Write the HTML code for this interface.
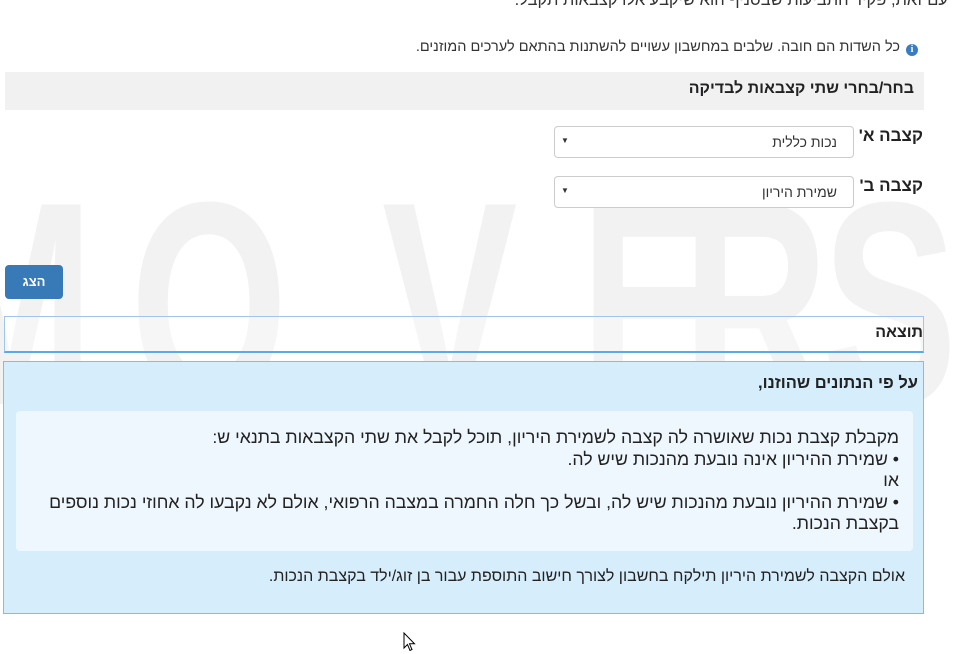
<!DOCTYPE html>
<html dir="rtl"><head><meta charset="utf-8"><style>
html,body{margin:0;width:954px;height:654px;overflow:hidden}
body{background:#fff;font-family:"Liberation Sans","DejaVu Sans Condensed",sans-serif;color:#333;position:relative}
.a{position:absolute}
.wmw{position:absolute;left:0;top:0;width:954px;height:654px;overflow:hidden}
.wm{position:absolute;top:159px;font-family:"Liberation Sans",sans-serif;font-weight:bold;font-size:290px;line-height:1;color:#f2f2f2;transform:scaleX(.7);transform-origin:left top;direction:ltr}
.sel{position:absolute;left:554px;width:298px;height:30px;border:1px solid #ccc;border-radius:4px;background:#fff;font-size:14px}
.sel span{position:absolute;right:16px;top:7px}
.sel i{position:absolute;left:6px;top:9px;font-style:normal;font-size:8px;color:#333}
.lbl{position:absolute;right:31px;font-size:17px;font-weight:bold;color:#222}
</style></head><body>
<div class="wmw">
<div class="wm" style="left:-75px">M</div>
<div class="wm" style="left:130px">O</div>
<div class="wm" style="left:382px">V</div>
<div class="wm" style="left:580px">E</div>
<div class="wm" style="left:682px">R</div>
<div class="wm" style="left:822px">S</div>
</div>
<div class="a" style="right:6px;top:-9px;font-size:16.5px;white-space:nowrap">עם זאת, פקיד התביעות שבסניף הוא שיקבע אלו קצבאות תקבל.</div>
<div class="a" style="right:36px;top:39px;font-size:14.5px;white-space:nowrap;color:#333"><span style="display:inline-block;width:12px;height:12px;border-radius:50%;background:#3a7cc4;color:#fff;font-size:10px;text-align:center;line-height:12px;font-weight:bold;margin-left:6px;vertical-align:-1px;font-family:serif">i</span>כל השדות הם חובה. שלבים במחשבון עשויים להשתנות בהתאם לערכים המוזנים.</div>
<div class="a" style="left:5px;top:72px;width:919px;height:38px;background:#f1f1f2"></div>
<div class="a" style="right:40px;top:80px;font-size:16px;font-weight:bold;color:#222">בחר/בחרי שתי קצבאות לבדיקה</div>
<div class="lbl" style="top:126px">קצבה א'</div>
<div class="sel" style="top:126px"><span>נכות כללית</span><i>▼</i></div>
<div class="lbl" style="top:176px">קצבה ב'</div>
<div class="sel" style="top:176px"><span>שמירת היריון</span><i>▼</i></div>
<div class="a" style="left:5px;top:265px;width:58px;height:34px;background:#3879b8;border-radius:4px;color:#fff;font-weight:bold;font-size:13px;text-align:center;line-height:34px">הצג</div>
<div class="a" style="left:4px;top:316px;width:918px;height:34px;border:1px solid #9fc4ee;border-bottom:2px solid #5aa9e8;background:rgba(255,255,255,.3)"></div>
<div class="a" style="right:31px;top:324px;font-size:16px;font-weight:bold;color:#222">תוצאה</div>
<div class="a" style="left:3px;top:361px;width:919px;height:251px;background:#d6eefc;border:1px solid #7cc0e8"></div>
<div class="a" style="right:36px;top:374px;font-size:16.5px;font-weight:bold;color:#222">על פי הנתונים שהוזנו,</div>
<div class="a" style="left:16px;top:411px;width:897px;height:140px;background:#eef7fe;border-radius:4px"></div>
<div class="a" style="right:55px;top:427px;width:885px;font-size:17.7px;line-height:21.5px;color:#222">מקבלת קצבת נכות שאושרה לה קצבה לשמירת היריון, תוכל לקבל את שתי הקצבאות בתנאי ש:<br>• שמירת ההיריון אינה נובעת מהנכות שיש לה.<br>או<br>• שמירת ההיריון נובעת מהנכות שיש לה, ובשל כך חלה החמרה במצבה הרפואי, אולם לא נקבעו לה אחוזי נכות נוספים בקצבת הנכות.</div>
<div class="a" style="right:49px;top:568px;font-size:16px;white-space:nowrap;color:#222">אולם הקצבה לשמירת היריון תילקח בחשבון לצורך חישוב התוספת עבור בן זוג/ילד בקצבת הנכות.</div>
<svg class="a" style="left:403px;top:632px" width="14" height="20" viewBox="0 0 14 20"><path d="M1 1 L1 16 L4.5 12.5 L7 18.5 L9 17.5 L6.5 11.8 L11.5 11.8 Z" fill="#fff" stroke="#000" stroke-width="1"/></svg>
</body></html>
